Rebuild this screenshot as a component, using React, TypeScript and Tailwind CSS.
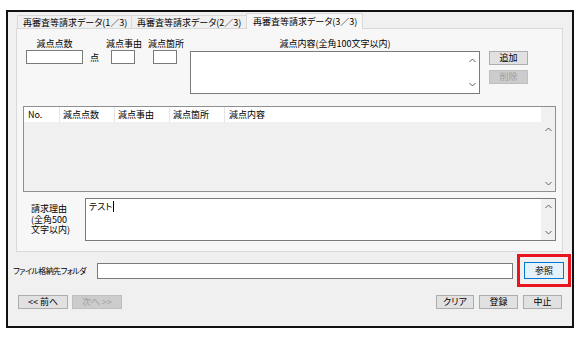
import type { ReactNode } from 'react';

function ChevUp() {
  return (
    <svg width="7" height="5" viewBox="0 0 7 5" className="block">
      <polyline points="0.5,4 3.5,1 6.5,4" fill="none" stroke="#606060" strokeWidth="1" />
    </svg>
  );
}

function ChevDown() {
  return (
    <svg width="7" height="5" viewBox="0 0 7 5" className="block">
      <polyline points="0.5,1 3.5,4 6.5,1" fill="none" stroke="#606060" strokeWidth="1" />
    </svg>
  );
}

function Btn({ children, w, disabled, focused }: { children: ReactNode; w: string; disabled?: boolean; focused?: boolean }) {
  const tone = disabled
    ? 'bg-[#cccccc] border-[#bfbfbf] text-[#a0a0a0]'
    : focused
      ? 'bg-[#e5f1fb] border-[#0078d7] text-black'
      : 'bg-[#e1e1e1] border-[#adadad] text-black';
  return <div className={`flex items-center justify-center border ${w} ${tone}`}>{children}</div>;
}

function Field({ label, w, inputW }: { label: string; w: string; inputW: string }) {
  return (
    <div className={`flex flex-col ${w}`}>
      <div className="h-[13px] text-center leading-[13px] whitespace-nowrap">{label}</div>
      <div className={`mx-auto h-[14px] border border-[#7a7a7a] bg-white ${inputW}`} />
    </div>
  );
}

export default function App() {
  const cols = ['減点点数', '減点事由', '減点箇所'];
  return (
    <div className="h-[342px] w-[586px] bg-white pt-[10px] pl-[6px] text-[9px] text-black font-['Noto_Sans_CJK_JP','Liberation_Sans',sans-serif] [font-feature-settings:'palt']">
      <div className="flex h-[318px] w-[568px] flex-col border-2 border-[#111] bg-[#f0f0f0]">
        {/* tabs */}
        <div className="mt-[1px] ml-[9px] flex h-[16px] items-start">
          <div className="mt-[2px] flex h-[13px] w-[115px] items-center border border-b-0 border-[#d9d9d9] pl-[5px] leading-none whitespace-nowrap">
            再審査等請求データ(1／3)
          </div>
          <div className="-ml-px mt-[2px] flex h-[13px] w-[116px] items-center border border-b-0 border-[#d9d9d9] pl-[5px] leading-none whitespace-nowrap">
            再審査等請求データ(2／3)
          </div>
          <div className="relative z-10 -ml-px flex h-[16px] w-[117px] items-center border border-b-0 border-[#d9d9d9] bg-[#f7f7f7] pl-[6px] leading-none whitespace-nowrap">
            再審査等請求データ(3／3)
          </div>
        </div>

        {/* tab page */}
        <div className="-mt-px ml-[8px] flex h-[224px] w-[547px] flex-col border border-[#d9d9d9] bg-[#f7f7f7]">
          <div className="flex items-start pt-[8px] pl-[9px]">
            <Field label="減点点数" w="w-[57px]" inputW="w-[57px]" />
            <div className="ml-[7px] w-[9px] pt-[15px] leading-[12px]">点</div>
            <div className="ml-[7px]">
              <Field label="減点事由" w="w-[34px]" inputW="w-[24px]" />
            </div>
            <div className="ml-[8px]">
              <Field label="減点箇所" w="w-[34px]" inputW="w-[24px]" />
            </div>
            <div className="ml-[8px] flex w-[290px] flex-col">
              <div className="h-[13px] text-center leading-[13px] whitespace-nowrap">減点内容(全角100文字以内)</div>
              <div className="mt-[1px] flex h-[43px] border border-[#7a7a7a] bg-white">
                <div className="flex-1" />
                <div className="flex w-[14px] flex-col items-center justify-between py-[6px]">
                  <ChevUp />
                  <ChevDown />
                </div>
              </div>
            </div>
            <div className="ml-[9px] flex flex-col gap-[5px] pt-[14px]">
              <Btn w="w-[39px] h-[14px]">追加</Btn>
              <Btn w="w-[39px] h-[14px]" disabled>
                削除
              </Btn>
            </div>
          </div>

          {/* list */}
          <div className="mt-[12px] ml-[6px] flex h-[86px] w-[533px] border border-[#8f8f8f] bg-[#f0f0f0]">
            <div className="flex flex-1 flex-col">
              <div className="flex h-[15px] bg-white leading-[15px]">
                <div className="w-[36px] border-r border-[#e5e5e5] pl-[4px]">No.</div>
                {cols.map((c) => (
                  <div key={c} className="w-[55px] border-r border-[#e5e5e5] pl-[3px]">
                    {c}
                  </div>
                ))}
                <div className="flex-1 pl-[4px]">減点内容</div>
              </div>
            </div>
            <div className="flex w-[14px] flex-col">
              <div className="h-[15px]" />
              <div className="flex flex-1 flex-col items-center justify-between pt-[5px] pb-[5px]">
                <ChevUp />
                <ChevDown />
              </div>
            </div>
          </div>

          {/* reason */}
          <div className="mt-[6px] flex pl-[14px]">
            <div className="flex w-[54px] flex-col pt-[6px] leading-[10.5px]">
              <span>請求理由</span>
              <span>(全角500</span>
              <span>文字以内)</span>
            </div>
            <div className="flex h-[43px] w-[471px] border border-[#7a7a7a] bg-white">
              <div className="flex flex-1 items-start pt-[2px] pl-[3px] leading-[12px]">
                テスト
                <span className="ml-px inline-block h-[11px] w-px bg-black" />
              </div>
              <div className="flex w-[14px] flex-col items-center justify-between bg-[#f0f0f0] py-[5px]">
                <ChevUp />
                <ChevDown />
              </div>
            </div>
          </div>
        </div>

        {/* folder row */}
        <div className="mt-[2px] flex items-center pl-[5px]">
          <div className="w-[84px] text-[8px] tracking-[-0.6px] whitespace-nowrap">ファイル格納先フォルダ</div>
          <div className="h-[16px] w-[416px] border border-[#7a7a7a] bg-white" />
          <div className="ml-[4px] border-[3px] border-[#e8141f] px-[4px] py-[5px]">
            <Btn w="w-[40px] h-[17px]" focused>
              参照
            </Btn>
          </div>
        </div>

        {/* bottom buttons */}
        <div className="mt-[8px] flex justify-between px-[10px]">
          <div className="flex gap-[4px]">
            <Btn w="w-[50px] h-[14px]">{'<< 前へ'}</Btn>
            <Btn w="w-[50px] h-[14px]" disabled>
              {'次へ >>'}
            </Btn>
          </div>
          <div className="flex gap-[5px]">
            <Btn w="w-[38px] h-[14px]">クリア</Btn>
            <Btn w="w-[39px] h-[14px]">登録</Btn>
            <Btn w="w-[39px] h-[14px]">中止</Btn>
          </div>
        </div>
      </div>
    </div>
  );
}
